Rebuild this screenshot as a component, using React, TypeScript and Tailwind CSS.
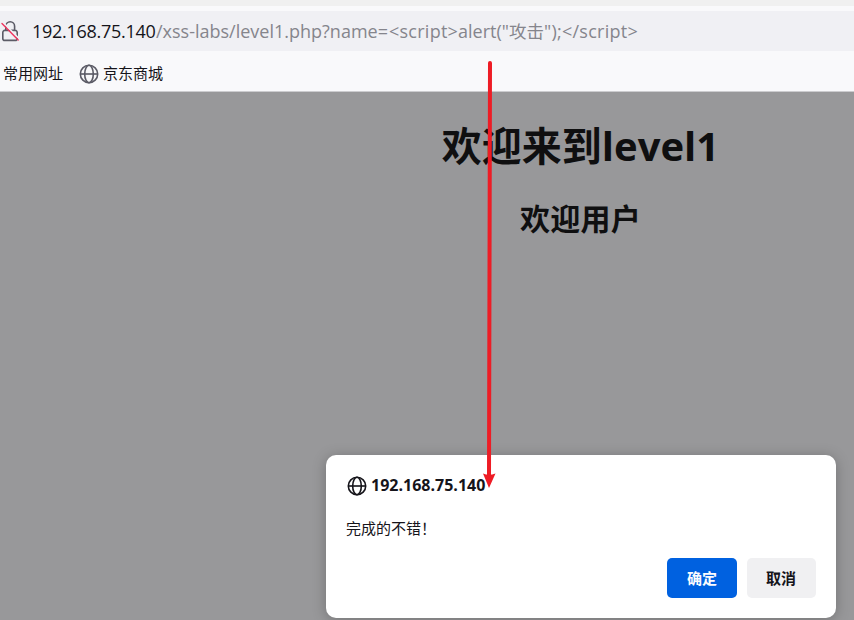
function Globe({ className }: { className: string }) {
  return (
    <svg className={className} viewBox="0 0 20 20" fill="none" stroke="currentColor" strokeWidth="1.6">
      <circle cx="10" cy="10" r="8.7" />
      <ellipse cx="10" cy="10" rx="4.3" ry="8.7" />
      <path d="M1.3 10h17.4" />
    </svg>
  );
}

function InsecureLock() {
  return (
    <svg className="h-[22px] w-5 shrink-0" viewBox="0 0 20 22" fill="none" strokeLinecap="round">
      <path
        d="M5.8 9.5V6.2a4.4 4.4 0 0 1 8.8 0v3.3M4.8 10.4h10.4a2 2 0 0 1 2 2v6a2 2 0 0 1-2 2H4.8a2 2 0 0 1-2-2v-6a2 2 0 0 1 2-2z"
        stroke="#5b5b66"
        strokeWidth="1.6"
      />
      <path d="M3 2.4 19 18.6" stroke="#f0f0f4" strokeWidth="1.6" />
      <path d="M2 3.4 18.2 20" stroke="#f0365f" strokeWidth="1.4" />
    </svg>
  );
}

function AddressBar() {
  return (
    <div className="flex h-10 items-center bg-[#f0f0f4]">
      <InsecureLock />
      <div className="ml-3 flex whitespace-pre text-[18px] leading-10 text-[#85858c]">
        <span className="w-[124px] tracking-[-0.27px] text-[#15141a]">192.168.75.140</span>
        <span className="w-[233px]">/xss-labs/level1.php?name=</span>
        <span className="w-[69px] tracking-[0.25px]">&lt;script&gt;</span>
        <span className="w-[51px]">alert("</span>
        <span className="w-[35px] text-[17.5px]">攻击</span>
        <span className="tracking-[0.25px]">");&lt;/script&gt;</span>
      </div>
    </div>
  );
}

function AlertDialog() {
  return (
    <section className="absolute left-[326px] top-[455px] flex h-[163px] w-[510px] flex-col rounded-[10px] bg-white px-5 pb-5 pt-5 text-[15px] text-[#15141a] shadow-[0_2px_14px_rgba(0,0,0,0.25)]">
      <div className="flex h-5 items-center font-bold">
        <Globe className="ml-[1px] mr-1 mt-[1px] size-5" />
        <span className="text-[16px] leading-5">192.168.75.140</span>
      </div>
      <p className="mt-[23px] h-5 leading-5">完成的不错！</p>
      <div className="mt-auto flex justify-end gap-[10px] font-bold">
        <button className="h-10 w-[70px] rounded-[5px] bg-[#0061e0] text-[#fbfbfe]">确定</button>
        <button className="h-10 w-[69px] rounded-[5px] bg-[#f0f0f2] pr-px">取消</button>
      </div>
    </section>
  );
}

export default function App() {
  return (
    <main className="relative flex h-[620px] w-[854px] flex-col overflow-hidden bg-[#f9f9fb] font-['Open_Sans','Noto_Sans_CJK_SC',sans-serif]">
      <div className="mb-[5px] h-[6px] shrink-0 bg-[#f0f0f0]" />
      <AddressBar />
      <nav className="flex h-[41px] items-center border-b border-[#cccccf] pt-[5px] text-[15px] text-[#15141a]">
        <span className="ml-[3px] h-[22px] leading-5">常用网址</span>
        <Globe className="ml-4 mr-1 size-5 text-[#5b5b66]" />
        <span className="h-[22px] leading-5">京东商城</span>
      </nav>
      <div className="flex-1 bg-[#98989a] pl-[307px] pt-[27px] text-center font-bold text-[#0f0f10]">
        <h1 className="text-[40px] leading-[54px]">欢迎来到level1</h1>
        <h2 className="mt-[26px] text-[30px] leading-10 tracking-[0.3px]">欢迎用户</h2>
      </div>
      <AlertDialog />
      <svg className="pointer-events-none absolute inset-0 size-full" viewBox="0 0 854 620">
        <path d="M490 63 489 477" stroke="#ee1c25" strokeWidth="4" strokeLinecap="round" />
        <path d="M483 473.5q6 2.5 12.5 0L489 488z" fill="#ee1c25" />
      </svg>
    </main>
  );
}
